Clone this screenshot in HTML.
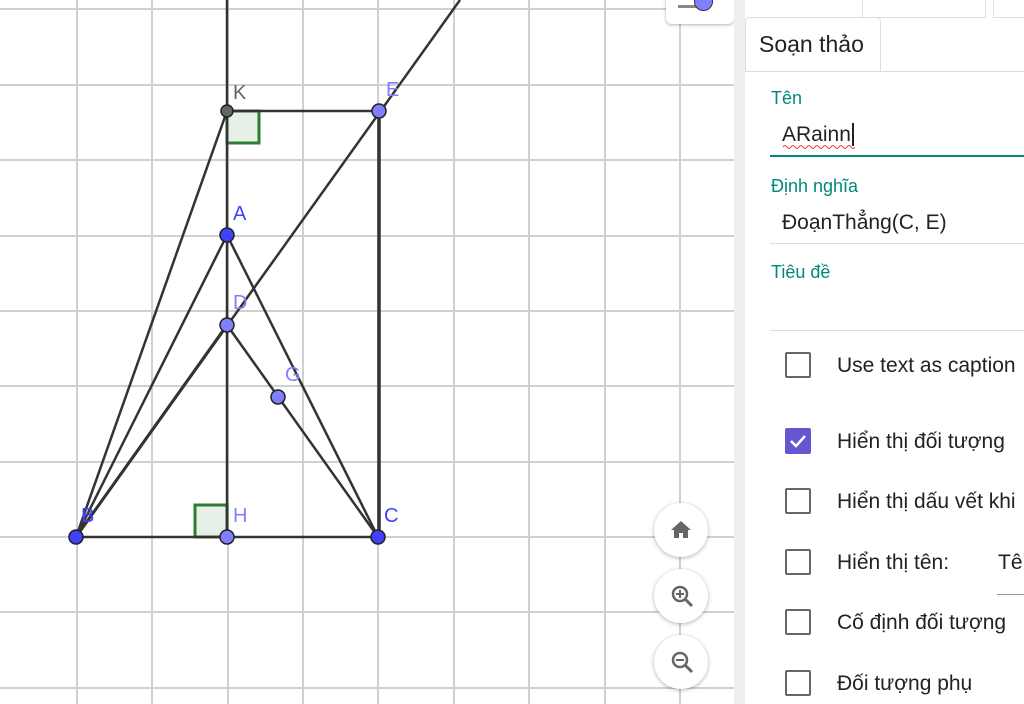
<!DOCTYPE html>
<html><head><meta charset="utf-8"><style>
body{margin:0;width:1024px;height:704px;overflow:hidden;background:#fff;font-family:"Liberation Sans",sans-serif;position:relative}
.p{position:absolute}
.cb{position:absolute;left:785px;width:22px;height:22px;border:2px solid #666;border-radius:2px}
.lb{position:absolute;left:837px;font-size:21px;color:#222;margin-top:2px}
.lab{position:absolute;left:771px;font-size:18px;color:#00897b}
.btn{position:absolute;left:654px;width:54px;height:54px;border-radius:50%;background:#fff;box-shadow:0 1px 4px rgba(0,0,0,.3)}
</style></head><body>
<svg class="p" style="left:0;top:0" width="734" height="704">
<g stroke="#d0d0d0" stroke-width="2">
<line x1="77" y1="0" x2="77" y2="704"/><line x1="152" y1="0" x2="152" y2="704"/><line x1="228" y1="0" x2="228" y2="704"/><line x1="303" y1="0" x2="303" y2="704"/><line x1="378" y1="0" x2="378" y2="704"/><line x1="454" y1="0" x2="454" y2="704"/><line x1="529" y1="0" x2="529" y2="704"/><line x1="605" y1="0" x2="605" y2="704"/><line x1="680" y1="0" x2="680" y2="704"/>
<line x1="0" y1="9" x2="734" y2="9"/><line x1="0" y1="85" x2="734" y2="85"/><line x1="0" y1="160" x2="734" y2="160"/><line x1="0" y1="236" x2="734" y2="236"/><line x1="0" y1="311" x2="734" y2="311"/><line x1="0" y1="386" x2="734" y2="386"/><line x1="0" y1="462" x2="734" y2="462"/><line x1="0" y1="537" x2="734" y2="537"/><line x1="0" y1="612" x2="734" y2="612"/><line x1="0" y1="688" x2="734" y2="688"/>
</g>
<rect x="227" y="111" width="32" height="32" fill="#e6f0e6" stroke="#2e7d32" stroke-width="3"/>
<rect x="195" y="505" width="32" height="32" fill="#e6f0e6" stroke="#2e7d32" stroke-width="3"/>
<g stroke="#333" stroke-width="2.5" fill="none">
<line x1="227" y1="0" x2="227" y2="537"/>
<line x1="227" y1="111" x2="379" y2="111"/>
<line x1="379" y1="111" x2="379" y2="537" stroke-width="3.5"/>
<line x1="76" y1="537" x2="460" y2="0"/>
<line x1="227" y1="111" x2="76" y2="537"/>
<line x1="227" y1="235" x2="76" y2="537"/>
<line x1="227" y1="325" x2="76" y2="537" stroke-width="3"/>
<line x1="227" y1="235" x2="378" y2="537"/>
<line x1="227" y1="325" x2="378" y2="537"/>
<line x1="76" y1="537" x2="378" y2="537"/>
</g>
<g stroke="#222" stroke-width="1.5">
<circle cx="227" cy="111" r="6" fill="#666"/>
<circle cx="379" cy="111" r="7" fill="#8080ff"/>
<circle cx="227" cy="235" r="7" fill="#4040ff"/>
<circle cx="227" cy="325" r="7" fill="#8080ff"/>
<circle cx="278" cy="397" r="7" fill="#8080ff"/>
<circle cx="76" cy="537" r="7" fill="#4040ff"/>
<circle cx="227" cy="537" r="7" fill="#8080ff"/>
<circle cx="378" cy="537" r="7" fill="#4040ff"/>
</g>
<g font-family="Liberation Sans" font-size="20">
<text x="233" y="99" fill="#666">K</text>
<text x="386" y="96" fill="#8080ff">E</text>
<text x="233" y="220" fill="#4040ff">A</text>
<text x="233" y="309" fill="#8080ff">D</text>
<text x="285" y="381" fill="#8080ff">G</text>
<text x="81" y="522" fill="#4040ff">B</text>
<text x="233" y="522" fill="#8080ff">H</text>
<text x="384" y="522" fill="#4040ff">C</text>
</g>
</svg>
<div class="p" style="left:666px;top:-10px;width:68px;height:34px;background:#fff;border-radius:6px;box-shadow:0 1px 3px rgba(0,0,0,.3)"></div>
<div class="p" style="left:678px;top:5px;width:20px;height:3px;background:#888"></div>
<div class="p" style="left:694px;top:-8px;width:17px;height:17px;border-radius:50%;background:#8080ff;border:1px solid #333"></div>
<div class="btn" style="top:503px"><svg width="54" height="54"><path d="M27 18 L17 27 H20 V35 H25 V30 H29 V35 H34 V27 H37 Z" fill="#666"/></svg></div>
<div class="btn" style="top:569px"><svg width="54" height="54"><circle cx="26" cy="25" r="7" fill="none" stroke="#666" stroke-width="2.5"/><line x1="31" y1="30" x2="38" y2="37" stroke="#666" stroke-width="3"/><path d="M22 25h8M26 21v8" stroke="#666" stroke-width="2"/></svg></div>
<div class="btn" style="top:635px"><svg width="54" height="54"><circle cx="26" cy="25" r="7" fill="none" stroke="#666" stroke-width="2.5"/><line x1="31" y1="30" x2="38" y2="37" stroke="#666" stroke-width="3"/><path d="M22 25h8" stroke="#666" stroke-width="2"/></svg></div>
<div class="p" style="left:734px;top:0;width:11px;height:704px;background:#eee"></div>
<div class="p" style="left:745px;top:0;width:279px;height:704px;background:#fff"></div>
<div class="p" style="left:862px;top:-2px;width:122px;height:18px;border:1px solid #ddd"></div>
<div class="p" style="left:993px;top:-2px;width:40px;height:18px;border:1px solid #ddd"></div>
<div class="p" style="left:745px;top:17px;width:134px;height:54px;border:1px solid #ddd;border-bottom:none;border-radius:4px 4px 0 0;background:#fff"></div>
<div class="p" style="left:745px;top:71px;width:279px;height:1px;background:#ddd"></div>
<div class="p" style="left:759px;top:31px;font-size:23px;color:#222">Soạn thảo</div>
<div class="lab" style="top:88px">Tên</div>
<div class="p" style="left:782px;top:123px;font-size:21px;color:#222">ARainn<span style="border-left:2px solid #222;margin-left:1px"></span></div>
<svg class="p" style="left:783px;top:144px" width="72" height="6"><path d="M0 3 q2 -3 4 0 t4 0 t4 0 t4 0 t4 0 t4 0 t4 0 t4 0 t4 0 t4 0 t4 0 t4 0 t4 0 t4 0 t4 0 t4 0 t4 0 t4 0" stroke="#e33" stroke-width="1" fill="none"/></svg>
<div class="p" style="left:770px;top:155px;width:254px;height:2px;background:#00897b"></div>
<div class="lab" style="top:176px">Định nghĩa</div>
<div class="p" style="left:782px;top:211px;font-size:21px;color:#222">ĐoạnThẳng(C, E)</div>
<div class="p" style="left:770px;top:243px;width:254px;height:1px;background:#ddd"></div>
<div class="lab" style="top:262px">Tiêu đề</div>
<div class="p" style="left:770px;top:330px;width:254px;height:1px;background:#ddd"></div>
<div class="cb" style="top:352px"></div><div class="lb" style="top:352px">Use text as caption</div>
<div class="cb" style="top:428px;background:#6557d2;border-color:#6557d2"><svg width="22" height="22"><path d="M4 11 L9 16 L18 6" stroke="#fff" stroke-width="2.5" fill="none"/></svg></div><div class="lb" style="top:428px">Hiển thị đối tượng</div>
<div class="cb" style="top:488px"></div><div class="lb" style="top:488px">Hiển thị dấu vết khi</div>
<div class="cb" style="top:549px"></div><div class="lb" style="top:549px">Hiển thị tên:</div>
<div class="p" style="left:998px;top:551px;font-size:21px;color:#222">Tê</div>
<div class="p" style="left:997px;top:594px;width:27px;height:1px;background:#999"></div>
<div class="cb" style="top:609px"></div><div class="lb" style="top:609px">Cố định đối tượng</div>
<div class="cb" style="top:670px"></div><div class="lb" style="top:670px">Đối tượng phụ</div>
</body></html>
